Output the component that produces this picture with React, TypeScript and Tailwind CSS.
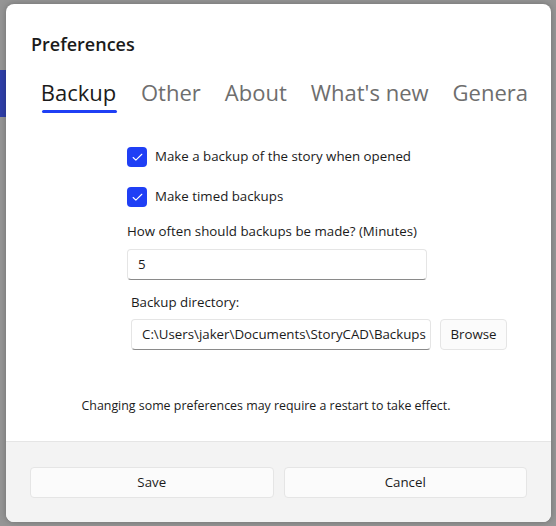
import { Check } from "lucide-react";

const font = { fontFamily: '"Open Sans", "Noto Sans", sans-serif' };

function CheckRow({ label }: { label: string }) {
  return (
    <div className="flex items-center gap-[8px] h-[20px]">
      <div className="w-[20px] h-[20px] rounded-[4px] bg-[#1f3ff5] flex items-center justify-center">
        <Check className="w-[13px] h-[13px] text-white" strokeWidth={2} />
      </div>
      <span className="text-[13.3px] text-[#1b1b1b]">{label}</span>
    </div>
  );
}

export default function App() {
  const tabs = ["Other", "About", "What's new", "Genera"];

  return (
    <div
      className="w-[556px] h-[526px] bg-[#959595] pl-[6px] pt-[4px] overflow-hidden relative"
      style={font}
    >
      {/* dimmed app behind the dialog */}
      <div className="absolute left-0 top-[70px] w-[6px] h-[47px] bg-[#2f3fa8]" />

      <div className="relative w-[545px] h-[518px] bg-white rounded-[8px] overflow-hidden flex flex-col shadow-[0_0_6px_rgba(0,0,0,0.25)]">
        <div className="flex-1 flex flex-col">
          <h1 className="ml-[25px] mt-[28px] text-[18px] font-semibold text-[#1b1b1b] leading-[24px]">
            Preferences
          </h1>

          <div className="ml-[34px] mt-[21px] w-[490px] overflow-hidden flex gap-[24px] whitespace-nowrap">
            <div className="flex flex-col items-center shrink-0">
              <span className="text-[22px] leading-[30px] text-[#1b1b1b]">Backup</span>
              <div className="mt-[3px] ml-[2px] w-[75px] h-[3px] rounded-full bg-[#1f3ff5]" />
            </div>
            {tabs.map(t => (
              <span key={t} className="text-[22px] leading-[30px] text-[#6e6e6e] shrink-0">
                {t}
              </span>
            ))}
          </div>

          <div className="ml-[121px] mt-[34px] flex flex-col text-[13.3px] text-[#1b1b1b]">
            <CheckRow label="Make a backup of the story when opened" />
            <div className="mt-[20px]">
              <CheckRow label="Make timed backups" />
            </div>
            <span className="mt-[14px] leading-[20px]">How often should backups be made? (Minutes)</span>
            <div className="mt-[8px] w-[300px] h-[31px] rounded-[4px] border border-[#e5e5e5] border-b-[#8a8a8a] flex items-center px-[10px]">
              5
            </div>
            <span className="mt-[12px] ml-[4px] leading-[20px]">Backup directory:</span>
            <div className="mt-[7px] ml-[4px] flex gap-[9px]">
              <div className="w-[300px] h-[31px] rounded-[4px] border border-[#e5e5e5] border-b-[#8a8a8a] flex items-center px-[10px] whitespace-nowrap overflow-hidden">
                C:\Users\jaker\Documents\StoryCAD\Backups
              </div>
              <button className="h-[31px] w-[67px] rounded-[4px] border border-[#e5e5e5] bg-[#fbfbfb]">
                Browse
              </button>
            </div>
          </div>

          <p className="mt-[47px] text-center text-[12.4px] text-[#1b1b1b] pr-[25px]">
            Changing some preferences may require a restart to take effect.
          </p>
        </div>

        <div className="h-[81px] bg-[#f3f3f3] border-t border-[#e5e5e5] px-[24px] pt-[25px] flex gap-[10px]">
          <button className="flex-1 h-[31px] rounded-[4px] border border-[#e5e5e5] bg-[#fbfbfb] text-[13.3px] text-[#1b1b1b]">
            Save
          </button>
          <button className="flex-1 h-[31px] rounded-[4px] border border-[#e5e5e5] bg-[#fbfbfb] text-[13.3px] text-[#1b1b1b]">
            Cancel
          </button>
        </div>
      </div>
    </div>
  );
}
